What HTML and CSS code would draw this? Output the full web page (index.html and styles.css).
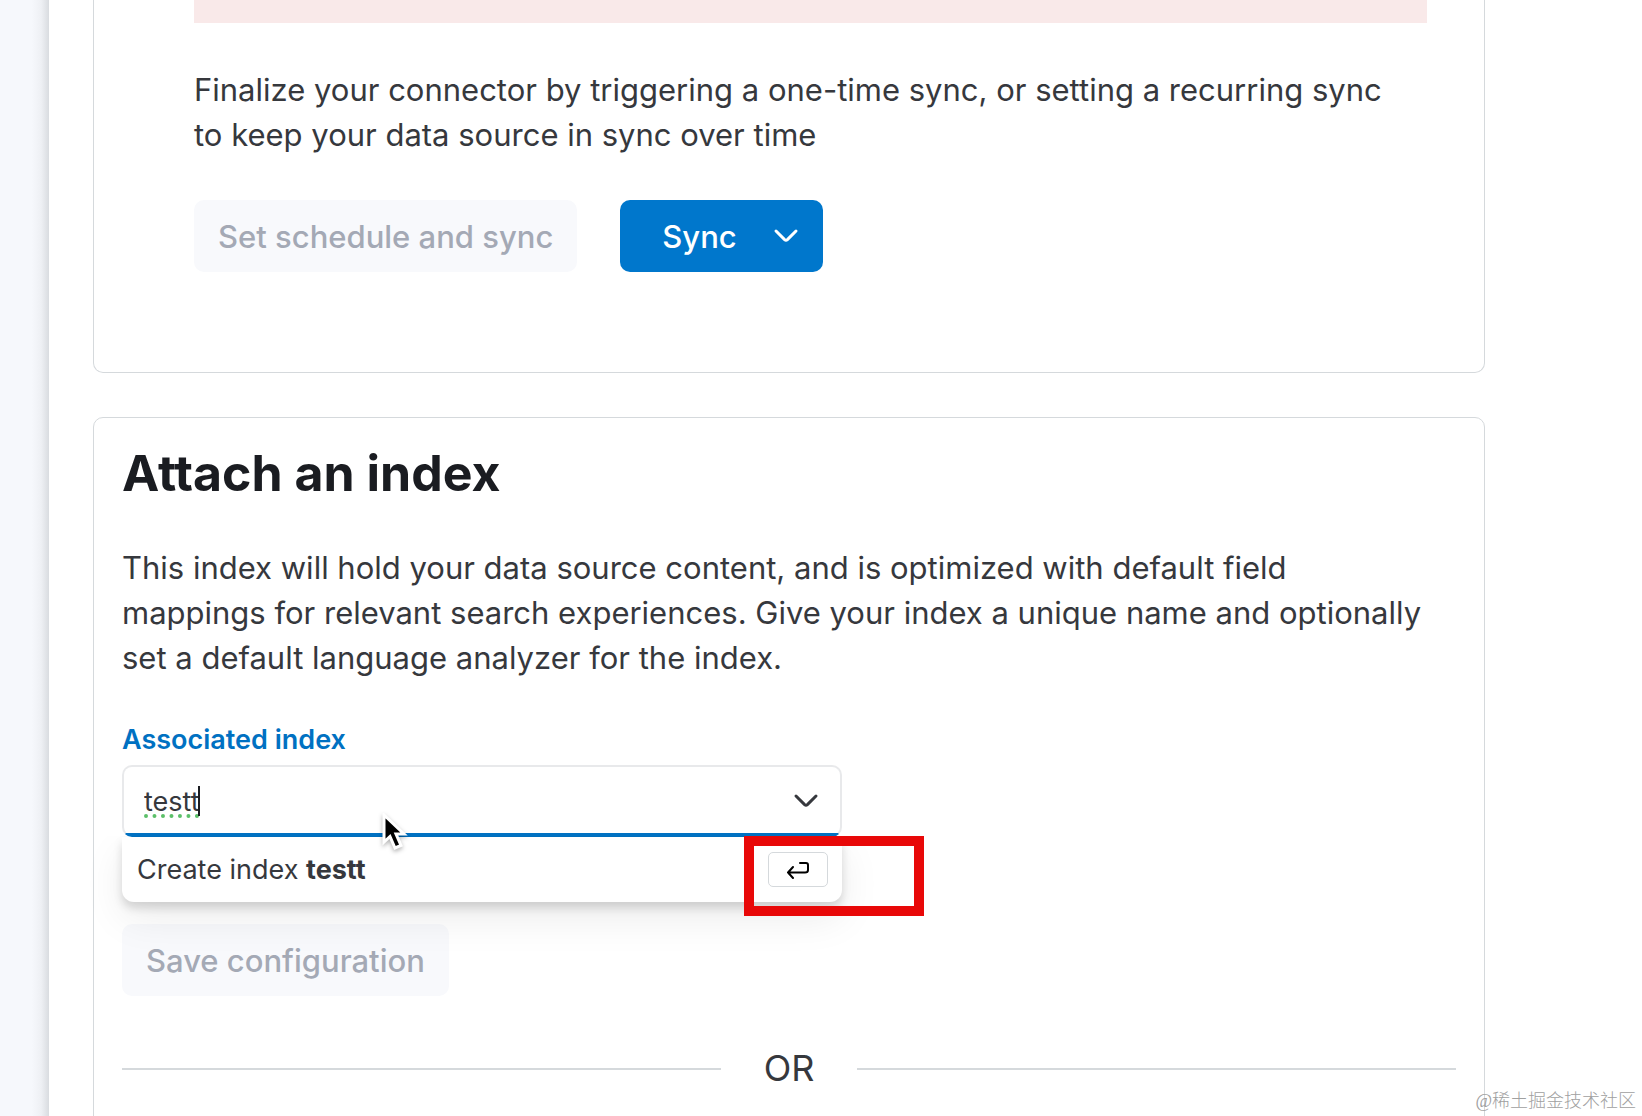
FILE: index.html
```html
<!DOCTYPE html>
<html lang="en">
<head>
  <meta charset="UTF-8" />
  <meta name="viewport" content="width=device-width, initial-scale=1.0"/>
  <title>Connector configuration</title>
  <link rel="stylesheet" href="styles.css">
</head>
<body>

  <div class="rail"></div>

  <main class="content">
    <section class="panel sync-panel">
      <div class="callout"></div>
      <p class="text">Finalize your connector by triggering a one-time sync, or setting a recurring sync to keep your data source in sync over time</p>
      <div class="actions">
        <button class="btn" disabled>Set schedule and sync</button>
        <button class="btn btn-primary">
          Sync
          <svg class="chevron" width="26" height="16" viewBox="0 0 26 16"><path d="M3 3l8.600 8.600q1.400 1.200 2.800 0L23 3"/></svg>
        </button>
      </div>
    </section>

    <section class="panel index-panel">
      <h2>Attach an index</h2>
      <p class="text">This index will hold your data source content, and is optimized with default field mappings for relevant search experiences. Give your index a unique name and optionally set a default language analyzer for the index.</p>

      <form class="index-form">
        <label for="indexName">Associated index</label>
        <div class="combo">
          <input type="text" id="indexName" value="testt" autocomplete="off" spellcheck="false" />
          <span class="caret"></span>
          <button type="button" class="combo-toggle" aria-label="Open list">
            <svg class="chevron" width="26" height="16" viewBox="0 0 26 16"><path d="M3 3l8.600 8.600q1.400 1.200 2.800 0L23 3"/></svg>
          </button>
          <svg class="pointer" width="28" height="40" viewBox="0 0 28 40">
            <path d="M3 2v27l6-5.500 5 11.500 6-2.500-5-11.500h8z"/>
          </svg>

          <div class="options">
            <button type="button" class="option">
              <span>Create index <strong>testt</strong></span>
              <span class="key">
                <svg width="24" height="18" viewBox="0 0 24 18"><path d="M14 2h6q2 0 2 2v5q0 2.500-3 2.500H2M7 6l-5 5.500L7 17"/></svg>
              </span>
            </button>
            <div class="highlight"></div>
          </div>
        </div>
        <button class="btn" disabled>Save configuration</button>
      </form>

      <div class="divider">OR</div>
    </section>
  </main>

  <div class="watermark">@稀土掘金技术社区</div>

</body>
</html>
```
FILE: styles.css
```css
* {
  box-sizing: border-box;
}
body {
  margin: 0;
  height: 100vh;
  overflow: hidden;
  display: flex;
  background: #fff;
  color: #36383d;
  font-family: Inter, sans-serif;
  font-size: 31px;
  line-height: 45px;
}
h2,
p {
  margin: 0;
}
button,
input {
  font-family: inherit;
}
.rail {
  flex: 0 0 49px;
  background: linear-gradient(to right, #f6f8fc 65%, #eef0f4 84%, #d9dce0);
}
.content {
  flex: 1;
  padding: 0 157px 0 44px;
}
.panel {
  border: 1px solid #d5d9dc;
  border-radius: 10px;
  background: #fff;
}
.sync-panel {
  border-top: none;
  border-radius: 0 0 10px 10px;
  padding: 0 57px 100px 100px;
  margin-bottom: 44px;
}
.text {
  padding-right: 32px;
}
.callout {
  height: 23px;
  margin-bottom: 44px;
  background: #f9e9e9;
}
.actions {
  display: flex;
  gap: 43px;
  margin-top: 43px;
}
.btn {
  display: inline-flex;
  align-items: center;
  height: 72px;
  padding: 0 24px;
  border: none;
  border-radius: 10px;
  background: #f8f9fc;
  color: #a4a9b5;
  font-size: 31px;
  font-weight: 500;
}
.btn-primary {
  gap: 36px;
  padding: 0 24px 0 42px;
  background: #0077cc;
  color: #fff;
}
.chevron {
  fill: none;
  stroke: currentColor;
  stroke-width: 3;
  stroke-linecap: round;
}
.index-panel {
  padding: 27px 28px 60px;
}
.index-panel h2 {
  margin-bottom: 44px;
  color: #1a1c21;
  font-size: 50px;
  line-height: 56px;
  font-weight: 700;
}
.index-form {
  margin-top: 43px;
}
.index-form label {
  display: block;
  margin-bottom: 8px;
  color: #0071c2;
  font-size: 27px;
  line-height: 34px;
  font-weight: 600;
}
.combo {
  position: relative;
  width: 54%;
  margin-bottom: 87px;
}
.combo input {
  display: block;
  width: 100%;
  height: 72px;
  padding: 0 80px 0 20px;
  border: 2px solid #e8e9eb;
  border-radius: 10px;
  outline: none;
  background: linear-gradient(#0071c2, #0071c2) bottom / 100% 4px no-repeat border-box #fff;
  border-bottom-color: transparent;
  color: #36383d;
  font-size: 27px;
  text-decoration: underline dotted #5cc069 4px;
  text-underline-offset: 4px;
}
.caret {
  position: absolute;
  left: 76px;
  top: 21px;
  width: 2px;
  height: 30px;
  background: #1a1c21;
}
.combo-toggle {
  position: absolute;
  right: 16px;
  top: 16px;
  display: flex;
  align-items: center;
  justify-content: center;
  width: 40px;
  height: 40px;
  padding: 0;
  border: none;
  background: none;
  color: #36383d;
}
.pointer {
  position: absolute;
  left: 259px;
  top: 48px;
  z-index: 2;
  fill: #000;
  stroke: #fff;
  stroke-width: 3;
  filter: drop-shadow(0 2px 2px rgba(0, 0, 0, 0.3));
}
.options {
  position: absolute;
  top: 72px;
  left: 0;
  width: 100%;
  border-radius: 0 0 12px 12px;
  background: #fff;
  box-shadow: 0 6px 10px rgba(0, 0, 0, 0.14), 0 16px 40px rgba(0, 0, 0, 0.08);
  clip-path: inset(-1px -120px -80px -80px);
}
.option {
  display: flex;
  align-items: center;
  justify-content: space-between;
  width: 100%;
  height: 65px;
  padding: 0 14px 0 15px;
  border: none;
  background: none;
  color: #36383d;
  font-size: 27px;
  text-align: left;
}
.key {
  display: flex;
  align-items: center;
  justify-content: center;
  width: 60px;
  height: 35px;
  border: 1px solid #d5d9dc;
  border-radius: 5px;
}
.key svg {
  fill: none;
  stroke: #000;
  stroke-width: 2;
  stroke-linecap: round;
  stroke-linejoin: round;
}
.highlight {
  position: absolute;
  top: -1px;
  right: -82px;
  width: 180px;
  height: 80px;
  border: 10px solid #e80808;
}
.divider {
  display: flex;
  align-items: center;
  gap: 43px;
  margin-top: 50px;
  font-size: 36px;
}
.divider::before,
.divider::after {
  content: "";
  flex: 1;
  height: 2px;
  background: #d5d9dc;
}
.watermark {
  position: absolute;
  right: 6px;
  bottom: 3px;
  color: #a0a0a0;
  font-family: "Liberation Serif", "Noto Sans CJK SC", sans-serif;
  font-size: 18px;
  line-height: 24px;
  font-weight: 300;
}
```
